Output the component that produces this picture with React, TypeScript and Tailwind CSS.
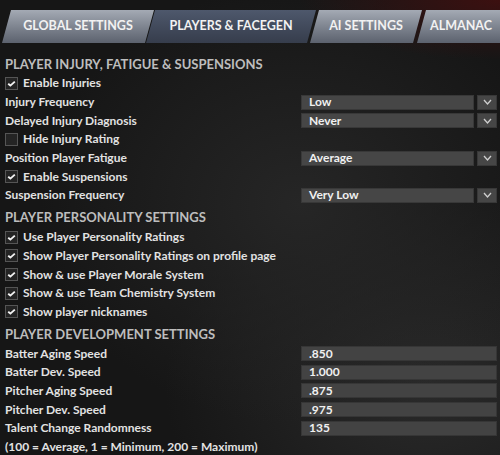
import React from "react";

type Row =
  | { kind: "check"; label: string; checked: boolean }
  | { kind: "select"; label: string; value: string }
  | { kind: "input"; label: string; value: string }
  | { kind: "text"; label: string };

const sections: { title: string; rows: Row[] }[] = [
  {
    title: "PLAYER INJURY, FATIGUE & SUSPENSIONS",
    rows: [
      { kind: "check", label: "Enable Injuries", checked: true },
      { kind: "select", label: "Injury Frequency", value: "Low" },
      { kind: "select", label: "Delayed Injury Diagnosis", value: "Never" },
      { kind: "check", label: "Hide Injury Rating", checked: false },
      { kind: "select", label: "Position Player Fatigue", value: "Average" },
      { kind: "check", label: "Enable Suspensions", checked: true },
      { kind: "select", label: "Suspension Frequency", value: "Very Low" },
    ],
  },
  {
    title: "PLAYER PERSONALITY SETTINGS",
    rows: [
      { kind: "check", label: "Use Player Personality Ratings", checked: true },
      { kind: "check", label: "Show Player Personality Ratings on profile page", checked: true },
      { kind: "check", label: "Show & use Player Morale System", checked: true },
      { kind: "check", label: "Show & use Team Chemistry System", checked: true },
      { kind: "check", label: "Show player nicknames", checked: true },
    ],
  },
  {
    title: "PLAYER DEVELOPMENT SETTINGS",
    rows: [
      { kind: "input", label: "Batter Aging Speed", value: ".850" },
      { kind: "input", label: "Batter Dev. Speed", value: "1.000" },
      { kind: "input", label: "Pitcher Aging Speed", value: ".875" },
      { kind: "input", label: "Pitcher Dev. Speed", value: ".975" },
      { kind: "input", label: "Talent Change Randomness", value: "135" },
      { kind: "text", label: "(100 = Average, 1 = Minimum, 200 = Maximum)" },
    ],
  },
];

function Checkbox({ checked }: { checked: boolean }) {
  return (
    <div className="w-[13px] h-[13px] border border-[#555] bg-[#242424] flex items-center justify-center mr-[5px]">
      {checked && (
        <svg width="9" height="7" viewBox="0 0 9 7">
          <path d="M1.2 3.8 L3.4 5.6 L7.8 1.6" stroke="#f2f2f2" strokeWidth="1.9" fill="none" />
        </svg>
      )}
    </div>
  );
}

function Chevron() {
  return (
    <svg width="9" height="6" viewBox="0 0 9 6">
      <path d="M1 1 L4.5 5 L8 1" stroke="#cfcfcf" strokeWidth="1.3" fill="none" />
    </svg>
  );
}

function SettingRow({ row }: { row: Row }) {
  if (row.kind === "check") {
    return (
      <div className="h-[18.7px] flex items-center">
        <Checkbox checked={row.checked} />
        <span>{row.label}</span>
      </div>
    );
  }
  if (row.kind === "text") {
    return (
      <div className="h-[18.7px] flex items-center">
        <span>{row.label}</span>
      </div>
    );
  }
  return (
    <div className="h-[18.7px] flex items-center">
      <span className="w-[296px] shrink-0">{row.label}</span>
      {row.kind === "select" ? (
        <div className="flex-1 flex gap-[3px] h-[15px]">
          <div className="flex-1 bg-[#464646] border border-[#383838] pl-[7px] flex items-center text-[#f0f0f0]">
            {row.value}
          </div>
          <div className="w-[20px] bg-[#464646] border border-[#383838] flex items-center justify-center">
            <Chevron />
          </div>
        </div>
      ) : (
        <div className="flex-1 h-[15px] bg-[#434343] border border-[#363636] pl-[7px] flex items-center text-[#f0f0f0]">
          {row.value}
        </div>
      )}
    </div>
  );
}

const tabs = [
  { label: "GLOBAL SETTINGS", w: "w-[152px] ml-[2px] justify-center", active: false },
  { label: "PLAYERS & FACEGEN", w: "w-[170px] -ml-[8px] justify-center", active: true },
  { label: "AI SETTINGS", w: "w-[112px] -ml-[6px] justify-center", active: false },
  { label: "ALMANAC", w: "w-[100px] -ml-[5px] justify-start pl-[13px]", active: false },
];

export default function App() {
  return (
    <div
      className="w-[500px] h-[455px] overflow-hidden bg-[#161616] bg-[radial-gradient(ellipse_200px_60px_at_100%_0%,#3c1010_0%,transparent_100%),radial-gradient(ellipse_260px_220px_at_60%_45%,#262626_0%,transparent_100%),radial-gradient(ellipse_260px_200px_at_85%_85%,#2a2a2a_0%,transparent_100%)] text-[#e2e2e2] font-bold text-[12px] leading-none"
      style={{ fontFamily: "Lato, 'Noto Sans', sans-serif" }}
    >
      <div className="flex pt-[10px] h-[43px]">
        {tabs.map((t) => (
          <div
            key={t.label}
            className={`${t.w} shrink-0 h-[33px] flex items-center font-bold text-[12.5px] text-[#f2f2f2] [clip-path:polygon(9px_0,100%_0,calc(100%-9px)_100%,0_100%)] ${
              t.active
                ? "bg-gradient-to-b from-[#4e586c] to-[#363d4c]"
                : "bg-gradient-to-b from-[#a4aab4] to-[#5c626e]"
            }`}
          >
            {t.label}
          </div>
        ))}
      </div>
      <div className="pl-[5px] pr-[3px] pt-[11px]">
        {sections.map((s, i) => (
          <div key={s.title}>
            <div
              className={`h-[20px] flex items-center font-bold text-[13px] text-[#bdbdbd] ${
                i > 0 ? "mt-[3px]" : ""
              }`}
            >
              {s.title}
            </div>
            {s.rows.map((r) => (
              <SettingRow key={r.label} row={r} />
            ))}
          </div>
        ))}
      </div>
    </div>
  );
}
